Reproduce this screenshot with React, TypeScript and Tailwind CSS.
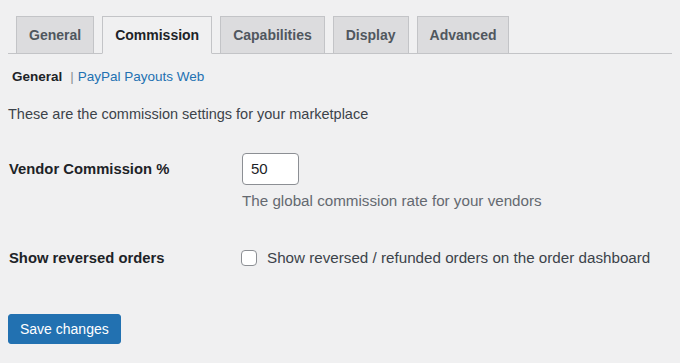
import React from 'react';

const tabs = ["General", "Commission", "Capabilities", "Display", "Advanced"];

const App = () => {
    return (
        <div className="min-h-screen bg-[#f0f0f1] px-2 pt-4 font-['Liberation_Sans',Arial,sans-serif] text-[#1d2327]">
            {/* tab strip */}
            <div className="flex gap-2 pl-2 border-b border-[#c3c4c7]">
                {tabs.map((tab) => {
                    const active = tab === "Commission";
                    return (
                        <div
                            key={tab}
                            className={
                                active
                                    ? "h-[38px] -mb-px flex items-center px-3 border border-[#c3c4c7] border-b-[#f0f0f1] bg-[#f0f0f1] text-[14px] font-bold text-[#1d2327]"
                                    : "h-[38px] -mb-px flex items-center px-3 border border-[#c3c4c7] bg-[#dcdcde] text-[14px] font-bold text-[#50575e]"
                            }
                        >
                            {tab}
                        </div>
                    );
                })}
            </div>

            {/* sub links */}
            <div className="mt-[13px] h-5 pl-1 flex items-center text-[13.5px] leading-5">
                <span className="font-bold text-[#1d2327]">General</span>
                <span className="ml-[8px] mr-[4px] text-[#8c8f94]">|</span>
                <span className="text-[#2271b1]">PayPal Payouts Web</span>
            </div>

            <p className="mt-[17px] text-[14.5px] leading-5 text-[#3c434a]">
                These are the commission settings for your marketplace
            </p>

            {/* settings */}
            <div className="mt-[29px] grid grid-cols-[234px_1fr]">
                <div className="h-8 flex items-center pl-px text-[14.8px] font-bold">Vendor Commission %</div>
                <div>
                    <div className="h-8 w-[57px] rounded-[4px] border border-[#8c8f94] bg-white flex items-center pl-[8px] text-[15px]">
                        50
                    </div>
                    <p className="mt-[6px] text-[15.2px] leading-5 text-[#646970]">
                        The global commission rate for your vendors
                    </p>
                </div>
            </div>

            <div className="mt-[37px] grid grid-cols-[234px_1fr]">
                <div className="h-5 flex items-center pl-px text-[14.8px] font-bold">Show reversed orders</div>
                <label className="h-5 flex items-center gap-[10px] -ml-px text-[15.2px] text-[#3c434a]">
                    <span className="w-4 h-4 rounded-[4px] border border-[#8c8f94] bg-white shrink-0" />
                    Show reversed / refunded orders on the order dashboard
                </label>
            </div>

            <button className="mt-[46px] h-[30px] px-[11px] rounded-[3px] border border-[#2271b1] bg-[#2271b1] text-white text-[14px]">
                Save changes
            </button>
        </div>
    );
};

export default App;
